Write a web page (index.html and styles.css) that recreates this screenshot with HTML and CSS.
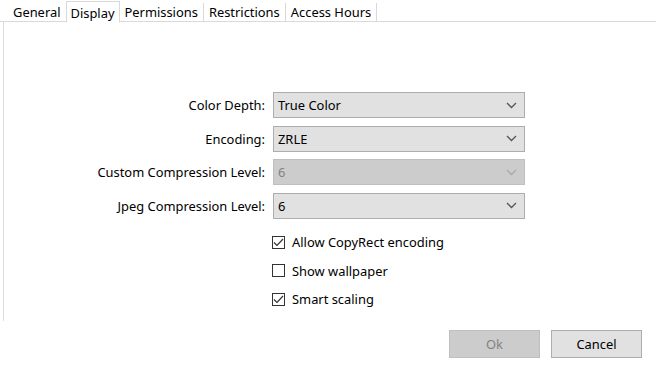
FILE: index.html
```html
<!DOCTYPE html>
<html>
<head>
<meta charset="utf-8">
<link rel="stylesheet" href="styles.css">
</head>
<body>
<div class="window">
  <div class="tabs">
    <div class="tab">General</div>
    <div class="tab active">Display</div>
    <div class="tab">Permissions</div>
    <div class="tab">Restrictions</div>
    <div class="tab">Access Hours</div>
  </div>
  <div class="panel">
    <div class="form">
      <label class="lbl">Color Depth:</label>
      <div class="select"><span>True Color</span><svg class="chev" width="11" height="7" viewBox="0 0 11 7"><polyline points="1,1 5.5,5.5 10,1" fill="none" stroke="#555" stroke-width="1.3"/></svg></div>
      <label class="lbl">Encoding:</label>
      <div class="select"><span>ZRLE</span><svg class="chev" width="11" height="7" viewBox="0 0 11 7"><polyline points="1,1 5.5,5.5 10,1" fill="none" stroke="#555" stroke-width="1.3"/></svg></div>
      <label class="lbl">Custom Compression Level:</label>
      <div class="select disabled"><span>6</span><svg class="chev" width="11" height="7" viewBox="0 0 11 7"><polyline points="1,1 5.5,5.5 10,1" fill="none" stroke="#aaa" stroke-width="1.3"/></svg></div>
      <label class="lbl">Jpeg Compression Level:</label>
      <div class="select"><span>6</span><svg class="chev" width="11" height="7" viewBox="0 0 11 7"><polyline points="1,1 5.5,5.5 10,1" fill="none" stroke="#555" stroke-width="1.3"/></svg></div>
    </div>
    <div class="checks">
      <div class="check"><span class="box"><svg width="13" height="13" viewBox="0 0 13 13"><polyline points="2,6.5 5,9.5 11,3" fill="none" stroke="#333" stroke-width="1.2"/></svg></span><span>Allow CopyRect encoding</span></div>
      <div class="check"><span class="box"></span><span>Show wallpaper</span></div>
      <div class="check"><span class="box"><svg width="13" height="13" viewBox="0 0 13 13"><polyline points="2,6.5 5,9.5 11,3" fill="none" stroke="#333" stroke-width="1.2"/></svg></span><span>Smart scaling</span></div>
    </div>
  </div>
  <div class="footer">
    <button class="btn disabled">Ok</button>
    <button class="btn">Cancel</button>
  </div>
</div>
</body>
</html>
```
FILE: styles.css
```css
html, body {
  margin: 0;
  padding: 0;
  background: #ffffff;
}
body {
  font-family: "Noto Sans", "Open Sans", sans-serif;
  font-size: 12.9px;
  color: #000;
}
.window {
  width: 656px;
  height: 365px;
  display: flex;
  flex-direction: column;
}
.tabs {
  display: flex;
  height: 21px;
  border-bottom: 1px solid #d9d9d9;
  padding-left: 8px;
  align-items: stretch;
}
.tab {
  padding: 0 5px;
  position: relative;
  border-right: 1px solid #d9d9d9;
  height: 18px;
  margin-top: 3px;
  line-height: 19px;
}
.tab:first-child {
  border-right: none;
}
.tab.active {
  background: #ffffff;
  border: 1px solid #d9d9d9;
  border-bottom: 1px solid #ffffff;
  margin-top: 1px;
  height: 20px;
  line-height: 22px;
  margin-bottom: -1px;
  padding: 0 4px;
}
.panel {
  margin-left: 3px;
  border-left: 1px solid #dcdcdc;
  height: 299px;
  box-sizing: border-box;
  padding-top: 70px;
}
.form {
  display: grid;
  grid-template-columns: 261px 252px;
  column-gap: 8px;
  row-gap: 7.5px;
  grid-auto-rows: 26px;
}
.lbl {
  text-align: right;
  line-height: 26px;
}
.select {
  box-sizing: border-box;
  background: #e1e1e1;
  border: 1px solid #adadad;
  display: flex;
  align-items: center;
  justify-content: space-between;
  padding: 0 7px 0 4px;
}
.select.disabled {
  background: #cccccc;
  border-color: #bfbfbf;
  color: #838383;
}
.checks {
  margin-left: 268px;
  margin-top: 17px;
  display: flex;
  flex-direction: column;
  gap: 15.5px;
}
.check {
  display: flex;
  align-items: center;
  gap: 7px;
  height: 13px;
}
.box {
  box-sizing: border-box;
  width: 13px;
  height: 13px;
  border: 1px solid #333;
  background: #fff;
  display: flex;
  align-items: center;
  justify-content: center;
}
.box svg {
  flex: none;
}
.footer {
  display: flex;
  justify-content: flex-end;
  gap: 11px;
  padding: 9px 14px 0 0;
}
.btn {
  width: 91px;
  height: 28px;
  box-sizing: border-box;
  background: #e1e1e1;
  border: 1px solid #adadad;
  font-family: "Noto Sans", "Open Sans", sans-serif;
  font-size: 12.9px;
  color: #000;
  padding: 0;
}
.btn.disabled {
  background: #cccccc;
  border-color: #bfbfbf;
  color: #838383;
}
```
